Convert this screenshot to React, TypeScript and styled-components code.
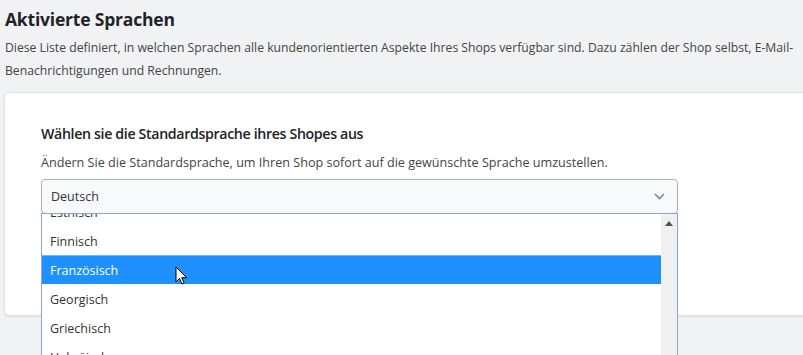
import React from 'react';
import styled, { createGlobalStyle } from 'styled-components';

const GlobalStyle = createGlobalStyle`
    html, body {
        margin: 0;
        padding: 0;
        background: #f1f2f4;
        overflow: hidden;
    }
    body {
        font-family: "Open Sans", "Noto Sans", sans-serif;
        color: #333;
    }
`;

const Page = styled('div')`
    width: 803px;
    height: 355px;
    padding: 6px 0 0 4px;
    box-sizing: border-box;
    overflow: hidden;
`;

const Header = styled('div')`
    padding-left: 1px;
`;

const Title = styled('h1')`
    margin: 0;
    font-size: 17.5px;
    line-height: 26px;
    font-weight: 700;
    letter-spacing: -0.2px;
    color: #1f2328;
`;

const Descr = styled('p')`
    margin: 4px 0 0;
    font-size: 12.2px;
    line-height: 23px;
    color: #444;
`;

const Card = styled('div')`
    margin-top: 10px;
    width: 900px;
    height: 224px;
    background: #fff;
    border: 1px solid #dde0e4;
    border-radius: 5px;
    box-shadow: 0 1px 2px rgba(0, 0, 0, 0.08);
    padding: 30px 36px;
    box-sizing: border-box;
`;

const CardTitle = styled('h2')`
    margin: 0;
    font-size: 14.2px;
    line-height: 22px;
    font-weight: 600;
    letter-spacing: -0.35px;
    color: #222;
`;

const CardDescr = styled('p')`
    margin: 9px 0 0;
    font-size: 12.6px;
    line-height: 18px;
    color: #444;
`;

const SelectWrap = styled('div')`
    position: relative;
    margin-top: 7px;
    width: 637px;
`;

const SelectBox = styled('div')`
    height: 35px;
    box-sizing: border-box;
    border: 1px solid #a9b0b8;
    border-radius: 4px;
    background: #f8f9fa;
    display: flex;
    align-items: center;
    justify-content: space-between;
    padding: 0 12px 0 9px;
    font-size: 12.5px;
    color: #333;
`;

const Dropdown = styled('div')`
    position: absolute;
    left: 0;
    top: 34px;
    width: 637px;
    height: 150px;
    box-sizing: border-box;
    border: 1px solid #8aa6d6;
    border-bottom: none;
    background: #fff;
    display: flex;
    overflow: hidden;
`;

const OptionList = styled('ul')`
    list-style: none;
    margin: -17px 0 0;
    padding: 0;
    flex: 1;
`;

const Option = styled('li')<{ $active?: boolean }>`
    height: 29px;
    box-sizing: border-box;
    display: flex;
    align-items: center;
    padding-left: 8px;
    font-size: 12.5px;
    color: ${p => (p.$active ? '#fff' : '#333')};
    background: ${p => (p.$active ? '#1e90ff' : 'transparent')};
    border-top: 1px solid ${p => (p.$active ? '#6fb6ff' : 'transparent')};
    position: relative;
`;

const Scrollbar = styled('div')`
    width: 16px;
    background: #f0f0f0;
    display: flex;
    justify-content: center;
    padding-top: 7px;
    box-sizing: border-box;
`;

const Cursor = styled('svg')`
    position: absolute;
    left: 133px;
    top: 10px;
`;

const options = ['Estnisch', 'Finnisch', 'Französisch', 'Georgisch', 'Griechisch', 'Hebräisch'];

export default function App() {
    return (
        <>
            <GlobalStyle />
            <Page>
                <Header>
                    <Title>Aktivierte Sprachen</Title>
                    <Descr>
                        Diese Liste definiert, in welchen Sprachen alle kundenorientierten Aspekte Ihres Shops verfügbar sind. Dazu zählen der Shop selbst, E-Mail-Benachrichtigungen und Rechnungen.
                    </Descr>
                </Header>
                <Card>
                    <CardTitle>Wählen sie die Standardsprache ihres Shopes aus</CardTitle>
                    <CardDescr>Ändern Sie die Standardsprache, um Ihren Shop sofort auf die gewünschte Sprache umzustellen.</CardDescr>
                    <SelectWrap>
                        <SelectBox>
                            <span>Deutsch</span>
                            <svg width="11" height="7" viewBox="0 0 11 7">
                                <path d="M1 1l4.5 4.5L10 1" fill="none" stroke="#7a8694" strokeWidth="1.6" />
                            </svg>
                        </SelectBox>
                        <Dropdown>
                            <OptionList>
                                {options.map(o => (
                                    <Option key={o} $active={o === 'Französisch'}>
                                        {o}
                                        {o === 'Französisch' && (
                                            <Cursor width="13" height="20" viewBox="0 0 13 20">
                                                <path d="M1 1v15l3.5-3.5 2.5 5.5 2.2-1-2.5-5.3h5z" fill="#fff" stroke="#000" strokeWidth="1" strokeLinejoin="round" />
                                            </Cursor>
                                        )}
                                    </Option>
                                ))}
                            </OptionList>
                            <Scrollbar>
                                <svg width="8" height="5" viewBox="0 0 8 5">
                                    <path d="M0 5L4 0l4 5z" fill="#505050" />
                                </svg>
                            </Scrollbar>
                        </Dropdown>
                    </SelectWrap>
                </Card>
            </Page>
        </>
    );
}
